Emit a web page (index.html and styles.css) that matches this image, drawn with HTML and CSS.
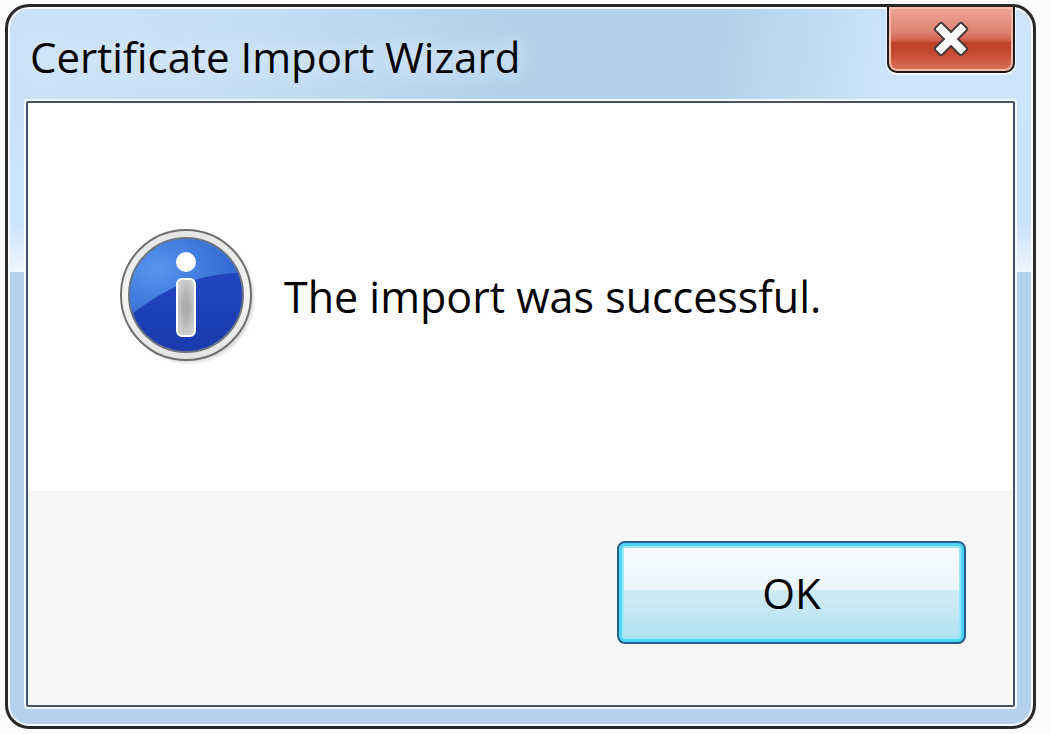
FILE: index.html
```html
<!DOCTYPE html>
<html lang="en">
<head>
    <meta charset="UTF-8">
    <meta name="viewport" content="width=device-width, initial-scale=1.0">
    <title>Certificate Import Wizard</title>
    <link rel="stylesheet" href="styles.css">
</head>
<body>
    <div class="window" role="dialog" aria-labelledby="title">
        <div class="title-bar">
            <h1 id="title">Certificate Import Wizard</h1>
            <button class="close-button" aria-label="Close">
                <svg width="36" height="36" viewBox="0 0 36 36">
                    <g fill="#fff" stroke="#4a3a3a" stroke-width="4" stroke-linejoin="round">
                        <rect x="0" y="14" width="36" height="8" rx="1" transform="rotate(45 18 18)"/>
                        <rect x="0" y="14" width="36" height="8" rx="1" transform="rotate(-45 18 18)"/>
                    </g>
                    <g fill="#fff">
                        <rect x="0" y="14" width="36" height="8" rx="1" transform="rotate(45 18 18)"/>
                        <rect x="0" y="14" width="36" height="8" rx="1" transform="rotate(-45 18 18)"/>
                    </g>
                </svg>
            </button>
        </div>

        <div class="client">
            <div class="message">
                <svg class="info-icon" width="140" height="140" viewBox="0 0 140 140">
                    <defs>
                        <linearGradient id="ring" x1="0" y1="0" x2="0" y2="1">
                            <stop offset="0" stop-color="#e4e4e4"/>
                            <stop offset="0.5" stop-color="#f4f3f0"/>
                            <stop offset="1" stop-color="#e2e2e2"/>
                        </linearGradient>
                        <linearGradient id="deep" x1="0" y1="0" x2="0" y2="1">
                            <stop offset="0.4" stop-color="#2145be"/>
                            <stop offset="1" stop-color="#1a3aae"/>
                        </linearGradient>
                        <radialGradient id="shine" cx="0.25" cy="0.4" r="0.8">
                            <stop offset="0" stop-color="#5796ee"/>
                            <stop offset="1" stop-color="#2c5fcb"/>
                        </radialGradient>
                        <radialGradient id="stem" cx="0.5" cy="0.5" r="0.7">
                            <stop offset="0.2" stop-color="#adadad"/>
                            <stop offset="1" stop-color="#dedede"/>
                        </radialGradient>
                        <radialGradient id="shadow">
                            <stop offset="0.9" stop-color="#000" stop-opacity="0.22"/>
                            <stop offset="1" stop-color="#000" stop-opacity="0"/>
                        </radialGradient>
                        <clipPath id="disc">
                            <circle cx="70" cy="70" r="57"/>
                        </clipPath>
                    </defs>
                    <circle cx="73" cy="73" r="67" fill="url(#shadow)"/>
                    <circle cx="70" cy="70" r="65" fill="url(#ring)" stroke="#6f6f6f" stroke-width="2"/>
                    <circle cx="70" cy="70" r="57" fill="url(#deep)"/>
                    <path d="M10 10 H130 V48 C82 48 47 63 10 94 Z" fill="url(#shine)" clip-path="url(#disc)"/>
                    <circle cx="70" cy="70" r="57" fill="none" stroke="#6c7484" stroke-width="2"/>
                    <circle cx="70" cy="37" r="10" fill="#fff"/>
                    <rect x="61" y="54" width="18" height="57" rx="5" fill="url(#stem)" stroke="#fff" stroke-width="2"/>
                </svg>
                <p>The import was successful.</p>
            </div>
            <div class="footer">
                <button class="ok-button">OK</button>
            </div>
        </div>
    </div>
</body>
</html>
```

FILE: styles.css
```css
* {
    box-sizing: border-box;
}

body {
    margin: 0;
    height: 100vh;
    padding: 4px 15px 5px 5px;
    background-color: #fcfcfd;
    font-family: "Open Sans", "Noto Sans", sans-serif;
    color: #000;
}

.window {
    display: flex;
    flex-direction: column;
    height: 100%;
    padding: 0 18px 19px;
    border: 3px solid #2b2729;
    border-radius: 24px;
    background:
        linear-gradient(to bottom, transparent 15%, #cbe3fb 22%, #cbe3fb 30%, #eef6ff 36.8%, #b6d1ed 36.8%),
        linear-gradient(100deg, #cbe1f7 0%, #c6def5 20%, #b2d0eb 45%, #b2d0eb 62%, #cee4fc 78%, #cee4fc 100%);
    box-shadow: inset 0 0 0 2px #f4faff;
}

.title-bar {
    display: flex;
    justify-content: space-between;
    align-items: flex-start;
    height: 94px;
    flex: none;
}

.title-bar h1 {
    margin: 21px 0 0 4px;
    font-size: 42px;
    line-height: 58px;
    font-weight: normal;
    text-shadow: 0 0 16px #dcebfa, 0 0 24px #dcebfa;
}

.close-button {
    display: flex;
    align-items: center;
    justify-content: center;
    width: 128px;
    height: 66px;
    padding: 0;
    border: 2px solid #211a1a;
    border-top: none;
    border-radius: 0 0 10px 10px;
    background: linear-gradient(to bottom, #efa898 0%, #de8170 40%, #d0614b 52%, #bf4227 56%, #c4492f 72%, #dc745c 100%);
    box-shadow: inset 0 0 0 2px #f3b9ab, 0 1px 0 1px #f0f8ff;
    cursor: pointer;
}

.client {
    display: flex;
    flex-direction: column;
    flex: 1;
    border: 2px solid #43536f;
    border-radius: 2px;
    background-color: #fff;
    box-shadow: 0 0 0 2px #f4faff;
}

.message {
    display: flex;
    align-items: center;
    flex: 1;
    gap: 28px;
    padding: 0 88px 4px;
}

.message p {
    margin: 0;
    padding-top: 4px;
    font-size: 43px;
    line-height: 58px;
}

.info-icon {
    flex: none;
}

.footer {
    display: flex;
    justify-content: flex-end;
    padding: 50px 47px 61px;
    background-color: #f6f6f6;
}

.ok-button {
    width: 349px;
    height: 103px;
    padding: 0;
    border: 2px solid #22608f;
    border-radius: 8px;
    background: linear-gradient(to bottom, #f8fcff 0%, #ebf6fb 47%, #d0ebf5 47%, #afe1f1 100%);
    box-shadow: inset 0 0 0 3px #50d4f5, inset 0 0 0 5px #9ce8fa;
    font-family: inherit;
    font-size: 42px;
    color: #000;
    cursor: pointer;
}
```
